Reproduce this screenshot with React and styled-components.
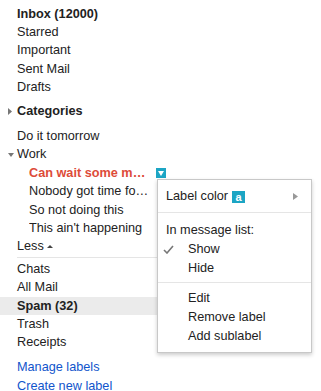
import React from "react";
import styled, { createGlobalStyle } from "styled-components";

const GlobalStyle = createGlobalStyle`
  body {
    margin: 0;
    background: #fff;
    font-family: "Liberation Sans", Arial, sans-serif;
  }
`;

const Page = styled.div`
  position: relative;
  width: 321px;
  height: 391px;
  overflow: hidden;
  background: #fff;
`;

const Nav = styled.nav`
  display: flex;
  flex-direction: column;
  width: 200px;
  padding-top: 4.7px;
  font-size: 12.7px;
  color: #222;
`;

const Group = styled.div`
  display: flex;
  flex-direction: column;
  margin-top: ${(p) => p.$gap || 0}px;
`;

const Row = styled.div`
  display: flex;
  align-items: center;
  height: 18.4px;
  line-height: 18.4px;
  padding-left: ${(p) => p.$indent ?? 17}px;
  font-weight: ${(p) => (p.$bold ? "bold" : "normal")};
  color: ${(p) => p.$color || "#222"};
  background: ${(p) => (p.$active ? "#ebebeb" : "transparent")};
  white-space: nowrap;
`;

const Caret = styled.span`
  display: flex;
  align-items: center;
  justify-content: center;
  width: 12px;
  height: 100%;
`;

const Truncate = styled.span`
  display: block;
  max-width: 120px;
  overflow: hidden;
  text-overflow: ellipsis;
  white-space: nowrap;
`;

const DropButton = styled.span`
  display: flex;
  align-items: center;
  justify-content: center;
  width: 10px;
  height: 10px;
  margin-left: 7px;
  background: #1ca5c4;
`;

const Divider = styled.div`
  height: 1px;
  margin: ${(p) => p.$margin || "0"};
  background: #e5e5e5;
`;

const LinkRow = styled(Row)`
  color: #1155cc;
`;

const Menu = styled.div`
  position: absolute;
  left: 157px;
  top: 179px;
  width: 153px;
  padding: 7px 0 6px;
  background: #fff;
  border: 1px solid #c8c8c8;
  box-shadow: 0 2px 4px rgba(0, 0, 0, 0.2);
  font-size: 12.7px;
  color: #222;
`;

const MenuItem = styled.div`
  position: relative;
  display: flex;
  align-items: center;
  height: 19px;
  line-height: 19px;
  padding-left: ${(p) => (p.$header ? 8 : 30)}px;
  white-space: nowrap;
`;

const CheckMark = styled.span`
  position: absolute;
  left: 5px;
  top: 5px;
  display: flex;
`;

const Swatch = styled.span`
  display: inline-flex;
  align-items: center;
  justify-content: center;
  width: 13px;
  height: 12px;
  margin-left: 4px;
  background: #1ca5c4;
  color: #fff;
  font-weight: bold;
  font-size: 11px;
  line-height: 12px;
`;

const SubArrow = styled.span`
  position: absolute;
  right: 13px;
  top: 6px;
  display: flex;
`;

const Triangle = ({ dir, color = "#777", w = 6, h = 4 }) => {
  const pts = {
    right: `0,0 ${w},${h / 2} 0,${h}`,
    down: `0,0 ${w},0 ${w / 2},${h}`,
    up: `0,${h} ${w},${h} ${w / 2},0`,
  }[dir];
  return (
    <svg width={w} height={h} viewBox={`0 0 ${w} ${h}`}>
      <polygon points={pts} fill={color} />
    </svg>
  );
};

const App = () => {
  const system = [
    { name: "Inbox (12000)", bold: true },
    { name: "Starred" },
    { name: "Important" },
    { name: "Sent Mail" },
    { name: "Drafts" },
  ];
  const work = [
    "Nobody got time for that",
    "So not doing this",
    "This ain't happening",
  ];
  const more = [
    { name: "Chats" },
    { name: "All Mail" },
    { name: "Spam (32)", bold: true, active: true },
    { name: "Trash" },
    { name: "Receipts" },
  ];

  return (
    <Page>
      <GlobalStyle />
      <Nav>
        <Group>
          {system.map((item) => (
            <Row key={item.name} $bold={item.bold}>
              {item.name}
            </Row>
          ))}
        </Group>

        <Group $gap={5.5}>
          <Row $indent={4} $bold>
            <Caret>
              <Triangle dir="right" w={4} h={7} />
            </Caret>
            <span style={{ marginLeft: 1 }}>Categories</span>
          </Row>
        </Group>

        <Group $gap={6.5}>
          <Row>Do it tomorrow</Row>
          <Row $indent={5}>
            <Caret>
              <Triangle dir="down" w={6} h={4} />
            </Caret>
            Work
          </Row>
          <Row $indent={29} $bold $color="#dd4b39">
            <Truncate>Can wait some more</Truncate>
            <DropButton>
              <Triangle dir="down" color="#fff" w={6} h={5} />
            </DropButton>
          </Row>
          {work.map((name) => (
            <Row key={name} $indent={29}>
              <Truncate>{name}</Truncate>
            </Row>
          ))}
          <Row>
            Less
            <span style={{ display: "flex", marginLeft: 3 }}>
              <Triangle dir="up" color="#444" w={6} h={3} />
            </span>
          </Row>
        </Group>

        <Divider $margin="1px 0 2px 17px" />

        <Group>
          {more.map((item) => (
            <Row key={item.name} $bold={item.bold} $active={item.active}>
              {item.name}
            </Row>
          ))}
        </Group>

        <Group $gap={6.6}>
          <LinkRow>Manage labels</LinkRow>
          <LinkRow>Create new label</LinkRow>
        </Group>
      </Nav>

      <Menu>
        <MenuItem $header>
          Label color
          <Swatch>a</Swatch>
          <SubArrow>
            <Triangle dir="right" color="#999" w={5} h={7} />
          </SubArrow>
        </MenuItem>
        <Divider $margin="6px 0 8px" />
        <MenuItem $header>In message list:</MenuItem>
        <MenuItem>
          <CheckMark>
            <svg width="11" height="9" viewBox="0 0 11 9">
              <polyline
                points="1,5 4,8 10,1"
                fill="none"
                stroke="#777"
                strokeWidth="1.6"
              />
            </svg>
          </CheckMark>
          Show
        </MenuItem>
        <MenuItem>Hide</MenuItem>
        <Divider $margin="4px 0 6px" />
        <MenuItem>Edit</MenuItem>
        <MenuItem>Remove label</MenuItem>
        <MenuItem>Add sublabel</MenuItem>
      </Menu>
    </Page>
  );
};

export default App;
